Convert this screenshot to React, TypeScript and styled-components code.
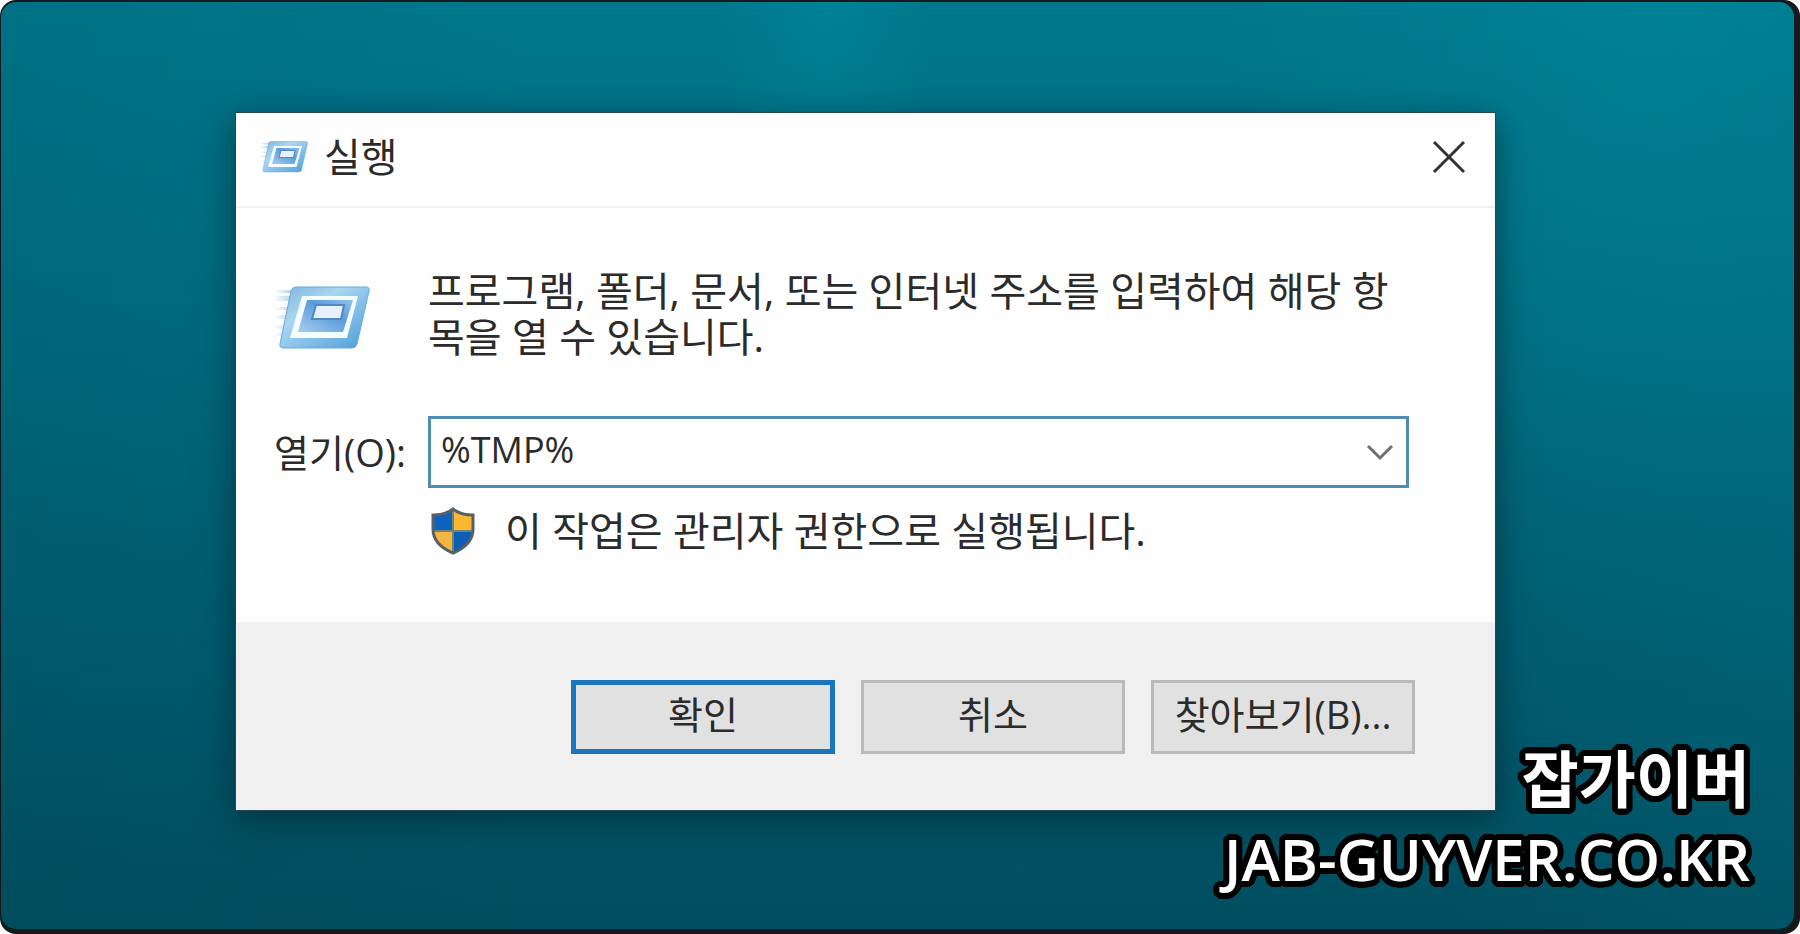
import React from "react";
import styled, { createGlobalStyle } from "styled-components";

const GlobalStyle = createGlobalStyle`
  *, *::before, *::after { box-sizing: border-box; }
  body {
    margin: 0;
    background: #ffffff;
    font-family: "Open Sans", "Noto Sans CJK KR", sans-serif;
    color: #2b2b2b;
  }
`;

/* Ring of hard shadows that draws a round-cornered outline around lettering. */
const outline = (radius: number, color: string) =>
  Array.from({ length: 24 }, (_, i) => {
    const angle = (i * Math.PI) / 12;
    const x = (Math.cos(angle) * radius).toFixed(1);
    const y = (Math.sin(angle) * radius).toFixed(1);
    return `${x}px ${y}px 0 ${color}`;
  }).join(", ");

const Frame = styled.div`
  min-height: 100vh;
  display: flex;
  padding: 2px 6px 5px 1px;
  border-radius: 16px;
  background: #14191b;
`;

const Desktop = styled.main`
  position: relative;
  flex: 1;
  padding: 110px 298px 80px 234px;
  border-radius: 15px;
  background:
    radial-gradient(ellipse 6% 30% at 46% 0%, rgba(0, 150, 168, 0.3), transparent),
    radial-gradient(ellipse 24% 60% at 92% 0%, rgba(0, 152, 170, 0.28), transparent),
    linear-gradient(90deg, rgba(0, 50, 66, 0.1) 0%, transparent 30%, transparent 80%, rgba(0, 130, 150, 0.12) 100%),
    linear-gradient(180deg, #00788c 0%, #006c80 35%, #005d70 68%, #004e5f 100%);
`;

const Dialog = styled.section`
  display: flex;
  flex-direction: column;
  border: 1px solid #244852;
  background: #fefefe;
  box-shadow: 0 8px 32px rgba(0, 20, 28, 0.5);
`;

const TitleBar = styled.header`
  display: flex;
  align-items: center;
  gap: 16px;
  height: 95px;
  padding: 0 24px 6px 24px;
  border-bottom: 2px solid #f1f1f1;
`;

const Title = styled.h1`
  flex: 1;
  margin: 0;
  font-size: 40px;
  font-weight: 400;
  line-height: 46px;
`;

const IconButton = styled.button`
  display: flex;
  align-items: center;
  justify-content: center;
  flex: none;
  width: 44px;
  height: 44px;
  padding: 0;
  border: 0;
  background: transparent;
`;

const Body = styled.div`
  display: grid;
  grid-template-columns: 154px 1fr;
  padding: 60px 86px 64px 38px;
`;

const IconCell = styled.div`
  padding-top: 16px;
`;

const Description = styled.p`
  margin: 0 0 56px;
  font-size: 40px;
  line-height: 46px;
`;

const FieldLabel = styled.label`
  align-self: center;
  font-size: 38px;
  line-height: 46px;
  white-space: nowrap;
`;

const ComboBox = styled.div`
  display: flex;
  align-items: center;
  height: 72px;
  padding-right: 4px;
  border: 3px solid #4f8cb0;
  background: #ffffff;
`;

const ComboInput = styled.input`
  flex: 1;
  min-width: 0;
  padding: 0 10px 4px;
  border: 0;
  outline: 0;
  background: transparent;
  color: inherit;
  font-family: inherit;
  font-size: 36px;
  line-height: 46px;
`;

const Notice = styled.p`
  grid-column: 2;
  display: flex;
  align-items: center;
  gap: 30px;
  margin: 16px 0 0;
  padding-left: 3px;
  font-size: 40px;
  line-height: 54px;
`;

const Footer = styled.footer`
  display: flex;
  justify-content: flex-end;
  gap: 26px;
  padding: 58px 80px 56px;
  background: #f0f0f0;
`;

const PushButton = styled.button<{ $primary?: boolean }>`
  width: 264px;
  height: 74px;
  padding: 0 0 6px;
  border: ${(p) => (p.$primary ? "5px solid #1a75bb" : "3px solid #b9b9b9")};
  background: #e1e1e1;
  color: inherit;
  font-family: inherit;
  font-size: 38px;
  line-height: 46px;
  white-space: nowrap;
`;

const Watermark = styled.aside`
  position: absolute;
  right: 44px;
  bottom: 30px;
  display: flex;
  flex-direction: column;
  align-items: flex-end;
  color: #ffffff;
  font-weight: 600;
  line-height: 80px;
  text-shadow: ${outline(6, "#000000")}, ${outline(3, "#000000")};
`;

const WatermarkName = styled.span`
  font-size: 62px;
  font-weight: 700;
`;

const WatermarkSite = styled.span`
  font-size: 58px;
`;

function RunIcon({ width, id }: { width: number; id: string }) {
  return (
    <svg width={width} height={(width * 66) / 96} viewBox="0 0 96 66" aria-hidden="true">
      <defs>
        <linearGradient id={`${id}-rim`} x1="0" y1="0" x2="1" y2="1">
          <stop offset="0" stopColor="#7fb3da" />
          <stop offset="0.35" stopColor="#a9d6f1" />
          <stop offset="1" stopColor="#4c9bdb" />
        </linearGradient>
        <linearGradient id={`${id}-core`} x1="0" y1="1" x2="1" y2="0">
          <stop offset="0" stopColor="#a8cdf0" />
          <stop offset="0.6" stopColor="#5b9bdc" />
          <stop offset="1" stopColor="#8fc3ec" />
        </linearGradient>
        <linearGradient id={`${id}-trail`} x1="0" y1="0" x2="1" y2="0">
          <stop offset="0" stopColor="#9cc9ea" stopOpacity="0" />
          <stop offset="1" stopColor="#7db5df" />
        </linearGradient>
      </defs>
      <path d="M2 6h24v3H2zM0 12h22v5H0zM1 23h20v3H1zM0 31h18v4H0zM0 41h16v4H0zM2 49h12v3H2z" fill={`url(#${id}-trail)`} />
      <path d="M22 3h70q4 0 3 4L83 60q-1 4-5 4H10q-5 0-4-4L17 7q1-4 5-4z" fill={`url(#${id}-rim)`} stroke="#6aa9d8" />
      <path d="M28 12h56L73 54H16z" fill="#f3fcff" />
      <path d="M33 16h46L69 48H24z" fill={`url(#${id}-core)`} />
      <path d="M42 21h28l-3 14H38z" fill="#e6f0fb" stroke="#5287c4" strokeWidth="2" />
    </svg>
  );
}

function ShieldIcon() {
  return (
    <svg width="44" height="48" viewBox="0 0 44 48" aria-hidden="true">
      <defs>
        <clipPath id="shield-outline">
          <path d="M22 1C17 5 9 7 1 7v15c0 12 9 20 21 25 12-5 21-13 21-25V7C35 7 27 5 22 1z" />
        </clipPath>
      </defs>
      <g clipPath="url(#shield-outline)">
        <path d="M0 0h22v24H0z" fill="#0b63bd" />
        <path d="M22 0h22v24H22z" fill="#fdb831" />
        <path d="M0 24h22v24H0z" fill="#f6b541" />
        <path d="M22 24h22v24H22z" fill="#0b5db5" />
        <path d="M22 0v48M0 24h44" stroke="#6f8578" strokeWidth="2" />
      </g>
      <path
        d="M22 2C17 6 9 8 2 8v14c0 11 8 19 20 24 12-5 20-13 20-24V8C35 8 27 6 22 2z"
        fill="none"
        stroke="#566068"
        strokeWidth="3"
      />
    </svg>
  );
}

export default function App() {
  return (
    <>
      <GlobalStyle />
      <Frame>
        <Desktop>
          <Dialog role="dialog" aria-labelledby="run-title">
            <TitleBar>
              <RunIcon width={48} id="small" />
              <Title id="run-title">실행</Title>
              <IconButton type="button" aria-label="닫기">
                <svg width="34" height="34" viewBox="0 0 34 34" aria-hidden="true">
                  <path d="M2 2l30 30M32 2L2 32" stroke="#333333" strokeWidth="3" />
                </svg>
              </IconButton>
            </TitleBar>
            <Body>
              <IconCell>
                <RunIcon width={96} id="large" />
              </IconCell>
              <Description>
                프로그램, 폴더, 문서, 또는 인터넷 주소를 입력하여 해당 항목을 열 수 있습니다.
              </Description>
              <FieldLabel htmlFor="open-field">열기(O):</FieldLabel>
              <ComboBox>
                <ComboInput id="open-field" type="text" defaultValue="%TMP%" />
                <IconButton type="button" aria-label="목록 열기">
                  <svg width="28" height="18" viewBox="0 0 28 18" aria-hidden="true">
                    <path d="M2 3l12 12L26 3" fill="none" stroke="#707070" strokeWidth="3" />
                  </svg>
                </IconButton>
              </ComboBox>
              <Notice>
                <ShieldIcon />
                <span>이 작업은 관리자 권한으로 실행됩니다.</span>
              </Notice>
            </Body>
            <Footer>
              <PushButton type="button" $primary>확인</PushButton>
              <PushButton type="button">취소</PushButton>
              <PushButton type="button">찾아보기(B)...</PushButton>
            </Footer>
          </Dialog>
          <Watermark>
            <WatermarkName>잡가이버</WatermarkName>
            <WatermarkSite>JAB-GUYVER.CO.KR</WatermarkSite>
          </Watermark>
        </Desktop>
      </Frame>
    </>
  );
}
